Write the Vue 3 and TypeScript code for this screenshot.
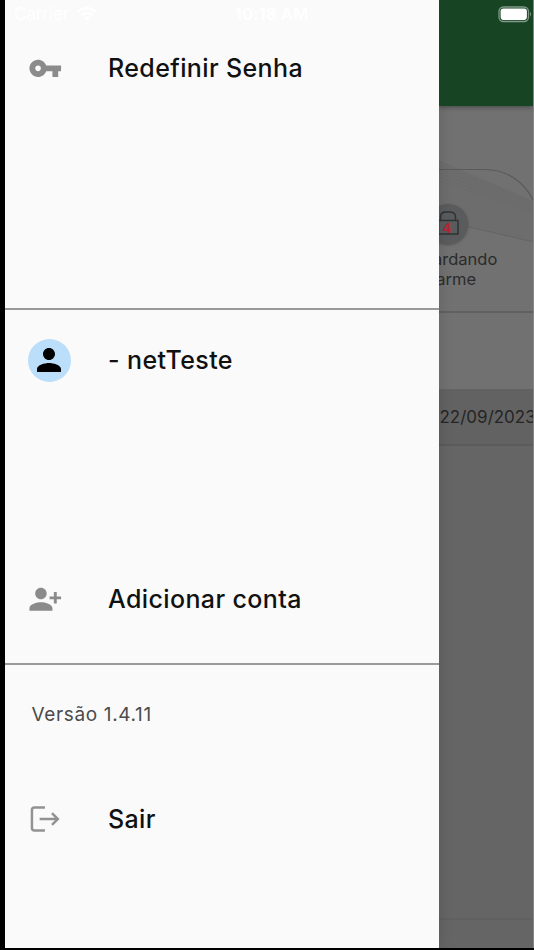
<script setup lang="ts">
const version: string = '1.4.11'
const account: string = '- netTeste'
const pending: number = 4
</script>

<template>
  <div class="phone">
    <div class="statusbar">
      <span class="carrier">Carrier</span>
      <svg class="wifi" viewBox="0 0 20 14"><path d="M10 14 6.8 10.7a4.6 4.6 0 0 1 6.4 0zM3.6 7.5a9.1 9.1 0 0 1 12.8 0l-1.7 1.8a6.7 6.7 0 0 0-9.4 0zM.2 4.1a14 14 0 0 1 19.6 0l-1.9 1.9a11.3 11.3 0 0 0-15.8 0z" /></svg>
      <span class="clock">10:18 AM</span>
      <svg class="battery" viewBox="0 0 35 17"><rect x="1" y="1" width="29.5" height="14.5" rx="4.5" class="case" /><rect x="2.6" y="2.6" width="26.3" height="11.3" rx="2.8" /><path d="M32 5.8q2 2.3 0 4.8z" class="tip" /></svg>
    </div>

    <nav class="drawer">
      <section class="top">
        <a class="item">
          <svg class="icon" viewBox="0 0 24 24"><path d="M12.65 10C11.83 7.67 9.61 6 7 6c-3.31 0-6 2.69-6 6s2.69 6 6 6c2.61 0 4.83-1.67 5.65-4H17v4h4v-4h2v-4H12.65zM7 14c-1.1 0-2-.9-2-2s.9-2 2-2 2 .9 2 2-.9 2-2 2z" /></svg>
          <span class="label">Redefinir Senha</span>
        </a>
      </section>
      <section class="accounts">
        <a class="item">
          <span class="avatar"><svg viewBox="0 0 24 24"><path d="M12 12c2.21 0 4-1.79 4-4s-1.79-4-4-4-4 1.79-4 4 1.79 4 4 4zm0 2c-2.67 0-8 1.34-8 4v2h16v-2c0-2.66-5.33-4-8-4z" /></svg></span>
          <span class="label">{{ account }}</span>
        </a>
        <a class="item">
          <svg class="icon" viewBox="0 0 24 24"><path d="M13 8c0-2.21-1.79-4-4-4S5 5.79 5 8s1.79 4 4 4 4-1.79 4-4zm2 2v2h3v3h2v-3h3v-2h-3V7h-2v3h-3zM1 18v2h16v-2c0-2.66-5.33-4-8-4s-8 1.34-8 4z" /></svg>
          <span class="label">Adicionar conta</span>
        </a>
      </section>
      <section class="bottom">
        <p class="version">Versão {{ version }}</p>
        <a class="item">
          <svg class="icon exit" viewBox="0 0 35 35"><path d="M17.2 5.500H6.500Q4 5.500 4 8v18.500Q4 29 6.500 29h10.700M11.800 17.300h18.200M24.300 11.300l6 6-6 6" /></svg>
          <span class="label">Sair</span>
        </a>
      </section>
    </nav>

    <main class="page">
      <header class="appbar"></header>
      <section class="summary">
        <svg class="decor" viewBox="0 0 95 206">
          <path d="M0 55 95 96v40L0 114z" class="sweep" />
          <path d="M0 55 95 96M0 59l95 39M0 63l95 37M0 67l95 35M0 71l95 33M0 75l95 31" class="ray" />
          <path d="M0 114 95 136" class="edge" />
          <path d="M0 63.500h46C68 63.500 86 76 95 96" class="frame" />
        </svg>
        <div class="stat">
          <div class="badge">
            <svg viewBox="0 0 40 40"><path d="M12.500 16.500V13q0-4.500 4.500-5h5.500q5 .5 5 5v3.500M10.500 16.500h19.500v13.500h-19.500z" /></svg>
            <b>{{ pending }}</b>
          </div>
          <div class="caption">Aguardando<br />alarme</div>
        </div>
      </section>
      <section class="space"></section>
      <div class="date">22/09/2023</div>
      <section class="list"></section>
      <footer class="foot"></footer>
    </main>
  </div>
</template>

<style>
body {
  background: #000;
  overflow: hidden;
}
</style>

<style scoped>
.phone {
  position: relative;
  box-sizing: border-box;
  display: flex;
  width: 534px;
  height: 950px;
  padding: 0 0 2px 4.5px;
  overflow: hidden;
  background: #000;
  font-family: Inter, "Liberation Sans", sans-serif;
}
.statusbar {
  position: absolute;
  z-index: 2;
  top: 4px;
  left: 14px;
  right: 0;
  height: 20px;
  display: flex;
  align-items: center;
  color: #fff;
  fill: #fff;
  font-size: 17px;
}
.carrier { width: 55px; letter-spacing: -0.1px; }
.wifi { width: 20px; height: 14px; margin-left: 8px; }
.clock { margin-left: 138px; width: 90px; font-weight: 600; font-size: 16.5px; letter-spacing: 0.2px; white-space: nowrap; }
.battery { width: 35px; height: 17px; margin-left: auto; margin-right: 1px; }
.case { fill: none; stroke: #809988; stroke-width: 1.3; }
.tip { fill: #809988; }
.drawer {
  position: relative;
  z-index: 1;
  flex: none;
  display: flex;
  flex-direction: column;
  width: 434px;
  background: #fafafa;
  box-shadow: 0 0 12px rgba(0, 0, 0, 0.15);
}
section { box-sizing: border-box; }
.top { height: 309.5px; padding-top: 40px; border-bottom: 2px solid #999; }
.accounts {
  display: flex;
  flex-direction: column;
  justify-content: space-between;
  height: 355.5px;
  padding: 22.5px 0 36px;
  border-bottom: 2px solid #999;
}
.bottom { padding-top: 37px; }
.item {
  display: flex;
  align-items: center;
  height: 56px;
  padding-left: 22.500px;
}
.icon { width: 34.5px; height: 34.5px; margin-right: 46px; margin-left: 0.5px; fill: #8b8b8b; flex: none; }
.exit { fill: none; stroke: #929292; stroke-width: 2.5; }
.avatar {
  display: flex;
  align-items: center;
  justify-content: center;
  flex: none;
  width: 43px;
  height: 43px;
  margin-right: 37.5px;
  margin-left: 0.5px;
  border-radius: 50%;
  background: #bbdefb;
}
.avatar svg { width: 36px; height: 36px; }
.label {
  color: #111;
  font-size: 25px;
  font-weight: 500;
  line-height: 30px;
  letter-spacing: 0.38px;
  white-space: nowrap;
}
.version {
  margin: 0 0 63px;
  padding-left: 27px;
  color: #4b4b4b;
  font-size: 19px;
  line-height: 26px;
  letter-spacing: 0.64px;
}
.page {
  flex: 1;
  min-width: 0;
  display: flex;
  flex-direction: column;
  overflow: hidden;
  background: #656565;
  border-right: 1px solid #858585;
}
.appbar {
  position: relative;
  z-index: 1;
  flex: none;
  height: 106px;
  background: #174524;
  box-shadow: 0 1px 5px rgba(0, 0, 0, 0.4);
}
.summary { position: relative; flex: none; height: 207px; padding-top: 98px; background: #717171; border-bottom: 2px solid #606060; }
.decor { position: absolute; top: 0; left: 0; width: 95px; height: 206px; }
.sweep { fill: #6d6d6d; }
.ray { fill: none; stroke: #696969; stroke-width: 0.6; }
.edge { stroke: #646464; stroke-width: 1; }
.frame { fill: none; stroke: #5a5a5a; stroke-width: 1.2; }
.stat {
  position: relative;
  display: flex;
  flex-direction: column;
  align-items: center;
  width: 22px;
}
.badge {
  position: relative;
  flex: none;
  width: 40px;
  height: 40px;
  margin-left: -4px;
  border-radius: 50%;
  background: #595b5c;
  box-shadow: 0 1px 3px rgba(0, 0, 0, 0.25);
}
.badge svg { display: block; width: 40px; height: 40px; fill: none; stroke: #303233; stroke-width: 1.5; }
.badge b { position: absolute; left: 15px; top: 17px; color: #bb2330; font-size: 13.5px; line-height: 14px; }
.caption { margin-top: 5px; color: #2b2b2b; font-size: 16.5px; line-height: 20px; text-align: center; white-space: nowrap; }
.space { flex: none; height: 76px; background: #717171; }
.date {
  flex: none;
  box-sizing: border-box;
  height: 57px;
  padding-left: 1px;
  background: #626262;
  border-bottom: 2px solid #5b5b5b;
  color: #252525;
  font-size: 17px;
  line-height: 56px;
  white-space: nowrap;
}
.list { flex: 1; }
.foot { height: 28px; border-top: 2px solid #606060; }
</style>
